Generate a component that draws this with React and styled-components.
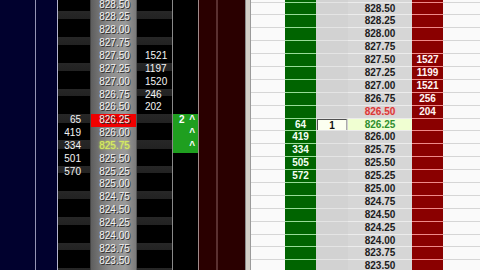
import React from 'react';
import styled, { createGlobalStyle } from 'styled-components';

const GlobalStyle = createGlobalStyle`
  html, body {
    margin: 0;
    padding: 0;
    background: #000;
  }
  body {
    font-family: "Liberation Sans", Arial, sans-serif;
  }
`;

const Screen = styled.div`
  display: flex;
  width: 480px;
  height: 270px;
  overflow: hidden;
`;

const DarkPanel = styled.div`
  display: flex;
  flex: none;
  width: 251px;
  height: 100%;
  background: #000;
`;

const Strip = styled.div`
  flex: none;
  width: ${(p) => p.$w}px;
  height: 100%;
  background: ${(p) => p.$bg};
`;

const Divider = styled.div`
  flex: none;
  width: 6px;
  height: 100%;
  box-sizing: border-box;
  background: #d4d0c8;
  border-left: 1px solid #8a8a8a;
  border-right: 1px solid #9a9a9a;
`;

const DarkLadder = styled.div`
  flex: none;
  width: 140px;
  height: 100%;
  overflow: hidden;
  display: flex;
  flex-direction: column;
`;

const DarkBody = styled.div`
  margin-top: -1.4px;
`;

const DarkRow = styled.div`
  display: grid;
  grid-template-columns: 32px 47px 35px 26px;
  height: 12.85px;
  font-size: 10px;
  line-height: 12.85px;
  color: #f4f4f4;
`;

const SizeCell = styled.div`
  box-sizing: border-box;
  text-align: ${(p) => (p.$side === 'bid' ? 'right' : 'left')};
  padding: ${(p) => (p.$side === 'bid' ? '0 9px 0 0' : '0 0 0 8px')};
  background: ${(p) =>
    p.$stripe ? 'linear-gradient(to bottom, #272727 0%, #222 62%, #000 62%)' : '#000'};
`;

const PriceCell = styled.div`
  text-align: center;
  padding-left: 2px;
  background: ${(p) =>
    p.$last ? '#f00000' : 'linear-gradient(to right, #5e5e5e, #8c8c8c 40%, #9a9a9a 75%, #7a7a7a)'};
  border-left: 1px solid #444;
  border-right: 1px solid #555;
  color: ${(p) => (p.$glow ? '#d8f060' : '#f2f2f2')};
  text-shadow: ${(p) => (p.$glow ? '0 0 2px #e8ff40' : '1px 1px 0 #2a2a2a')};
`;

const OrderCell = styled.div`
  display: flex;
  justify-content: space-between;
  align-items: center;
  box-sizing: border-box;
  padding: 0 3px 0 6px;
  border-left: 1px solid #8a8a8a;
  background: ${(p) => (p.$active ? '#1f9f1f' : '#000')};
  border-bottom: ${(p) => (p.$active ? '1px solid #168016' : 'none')};
  font-weight: bold;
  color: #fff;
`;

const LightPanel = styled.div`
  flex: none;
  width: 229px;
  height: 100%;
  overflow: hidden;
  background: #fafafa;
`;

const LightBody = styled.div`
  margin-top: -11.4px;
`;

const LightRow = styled.div`
  display: grid;
  grid-template-columns: 34px 31px 32px 64px 31px 37px;
  height: 12.9px;
  font-size: 10px;
  font-weight: bold;
  line-height: 9.5px;
`;

const tones = {
  blank: { bg: '#fafafa', line: '#d6d6d6', fg: '#222' },
  bid: { bg: '#006400', line: '#98dc98', fg: '#f4fff4' },
  work: { bg: '#d2d2d2', line: '#e4e4e4', fg: '#222' },
  price: { bg: '#d6d6d6', line: '#ececec', fg: '#1c1c1c' },
  ask: { bg: '#8a0000', line: '#f08a8a', fg: '#fff4f4' },
};

const LightCell = styled.div`
  position: relative;
  box-sizing: border-box;
  padding-top: 1px;
  text-align: center;
  background: ${(p) => (p.$hot ? '#f0ffd2' : tones[p.$tone].bg)};
  border-top: 1px solid ${(p) => tones[p.$tone].line};
  color: ${(p) => (p.$color ? p.$color : tones[p.$tone].fg)};
  text-shadow: ${(p) => (p.$color === '#d83838' ? '0 0 2px #ffb0b0' : 'none')};
`;

const QtyBox = styled.div`
  position: absolute;
  left: 1px;
  right: 1px;
  top: 0;
  height: 14px;
  box-sizing: border-box;
  background: #fcfff0;
  border: 1px solid #505050;
  border-right-color: #aaa;
  border-bottom-color: #aaa;
  line-height: 12px;
  color: #111;
`;

const prices = [
  '828.75', '828.50', '828.25', '828.00', '827.75', '827.50', '827.25', '827.00',
  '826.75', '826.50', '826.25', '826.00', '825.75', '825.50', '825.25', '825.00',
  '824.75', '824.50', '824.25', '824.00', '823.75', '823.50', '823.25',
];

const darkBids = { '826.25': 65, '826.00': 419, '825.75': 334, '825.50': 501, '825.25': 570 };
const darkAsks = { '827.50': 1521, '827.25': 1197, '827.00': 1520, '826.75': 246, '826.50': 202 };
const orders = { '826.25': '2', '826.00': '', '825.75': '' };

const lightBids = { '826.25': 64, '826.00': 419, '825.75': 334, '825.50': 505, '825.25': 572 };
const lightAsks = { '827.50': 1527, '827.25': 1199, '827.00': 1521, '826.75': 256, '826.50': 204 };

// rows that sit only partly in view show their colours but no label
const visible = (p) => p !== '828.75' && p !== '823.25';

function DarkDom() {
  const rows = prices.slice(1);
  return (
    <DarkLadder>
      <DarkBody>
        {rows.map((p, i) => {
          const stripe = i % 2 === 1;
          const hasOrder = p in orders;
          return (
            <DarkRow key={p}>
              <SizeCell $side="bid" $stripe={stripe}>{darkBids[p]}</SizeCell>
              <PriceCell $last={p === '826.25'} $glow={p === '825.75'}>
                {visible(p) ? p : ''}
              </PriceCell>
              <SizeCell $side="ask" $stripe={stripe}>{darkAsks[p]}</SizeCell>
              <OrderCell $active={hasOrder}>
                {hasOrder && (
                  <>
                    <span>{orders[p]}</span>
                    <span>^</span>
                  </>
                )}
              </OrderCell>
            </DarkRow>
          );
        })}
      </DarkBody>
    </DarkLadder>
  );
}

function LightDom() {
  return (
    <LightPanel>
      <LightBody>
        {prices.slice(0, -1).map((p) => {
          let color;
          if (p === '826.50') color = '#d83838';
          if (p === '826.25') color = '#2f8f2f';
          return (
            <LightRow key={p}>
              <LightCell $tone="blank" />
              <LightCell $tone="bid">{lightBids[p]}</LightCell>
              <LightCell $tone="work">
                {p === '826.25' && <QtyBox>1</QtyBox>}
              </LightCell>
              <LightCell $tone="price" $hot={p === '826.25'} $color={color}>
                {visible(p) ? p : ''}
              </LightCell>
              <LightCell $tone="ask">{lightAsks[p]}</LightCell>
              <LightCell $tone="blank" />
            </LightRow>
          );
        })}
      </LightBody>
    </LightPanel>
  );
}

export default function App() {
  return (
    <>
      <GlobalStyle />
      <Screen>
        <DarkPanel>
          <Strip $w={35} $bg="#01012e" />
          <Strip $w={1} $bg="#9494b4" />
          <Strip $w={21} $bg="#01012e" />
          <Strip $w={1} $bg="#b4b4cc" />
          <DarkDom />
          <Strip $w={1} $bg="#a08a8a" />
          <Strip $w={17} $bg="#2a0000" />
          <Strip $w={2} $bg="#5a3030" />
          <Strip $w={27} $bg="#2a0000" />
          <Divider />
        </DarkPanel>
        <LightDom />
      </Screen>
    </>
  );
}
